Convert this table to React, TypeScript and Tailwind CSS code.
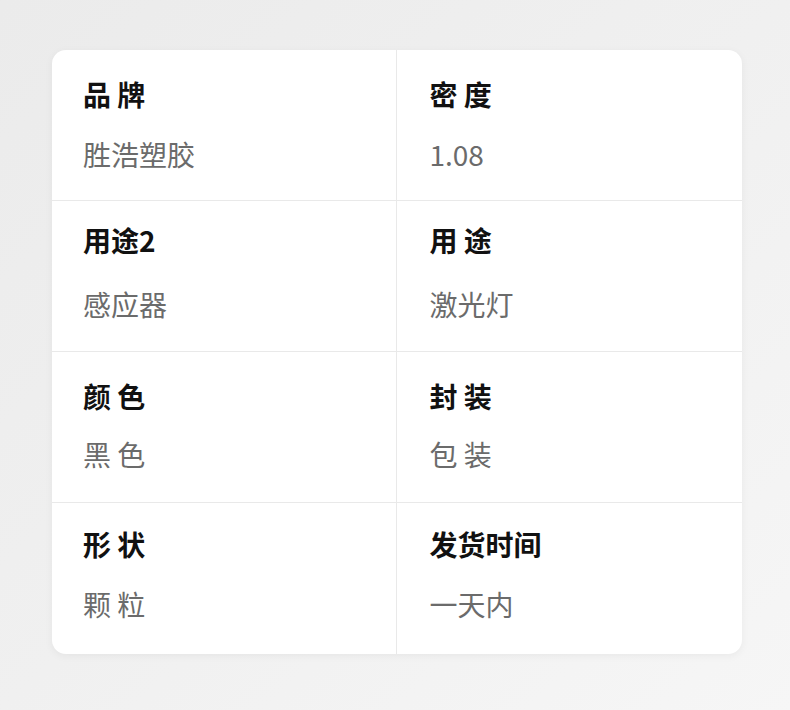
const rows = [
  { l1: '品 牌', v1: '胜浩塑胶', l2: '密 度', v2: '1.08', h: 'border-b', pt: 'pt-[25px]', gap: 'gap-[22px]' },
  { l1: '用途2', v1: '感应器', l2: '用 途', v2: '激光灯', h: 'border-b', pt: 'pt-[20px]', gap: 'gap-[26px]' },
  { l1: '颜 色', v1: '黑 色', l2: '封 装', v2: '包 装', h: 'border-b', pt: 'pt-[25px]', gap: 'gap-[20px]' },
  { l1: '形 状', v1: '颗 粒', l2: '发货时间', v2: '一天内', h: '', pt: 'pt-[22px]', gap: 'gap-[22px]' },
]

function Cell({ label, value, cls }: { label: string; value: string; cls: string }) {
  return (
    <div className={`flex flex-1 flex-col ${cls}`}>
      <span className="text-[28px] leading-[38px] font-bold text-[#111]">{label}</span>
      <span className="text-[28px] leading-[38px] text-[#6b6b6b]">{value}</span>
    </div>
  )
}

export default function App() {
  return (
    <div
      className="w-[790px] h-[710px] bg-gradient-to-br from-[#ebebeb] via-[#f0f0f0] to-[#f6f6f6] pt-[50px] pl-[52px]"
      style={{ fontFamily: '"Noto Sans CJK SC", "Noto Sans", sans-serif' }}
    >
      <div className="w-[690px] rounded-[14px] bg-white shadow-[0_2px_8px_rgba(0,0,0,0.05)] flex flex-col overflow-hidden">
        {rows.map((r, i) => (
          <div key={i} className={`flex h-[151px] border-[#e9e9e9] ${r.h}`}>
            <Cell label={r.l1} value={r.v1} cls={`pl-[31px] ${r.pt} ${r.gap}`} />
            <Cell
              label={r.l2}
              value={r.v2}
              cls={`pl-[33px] border-l border-[#e9e9e9] ${r.pt} ${r.gap}`}
            />
          </div>
        ))}
      </div>
    </div>
  )
}
